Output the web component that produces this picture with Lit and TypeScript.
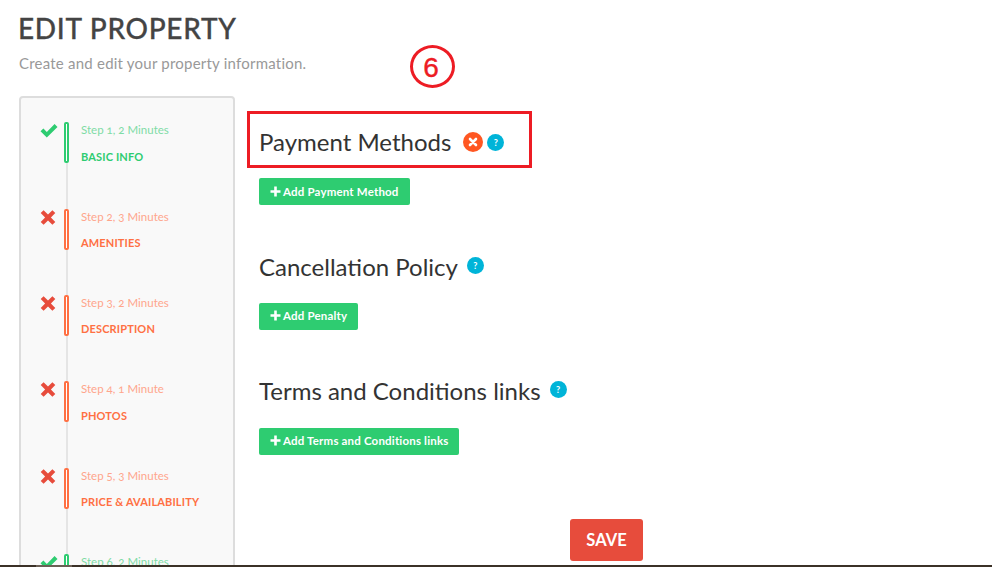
import { LitElement, html, css, svg } from "lit";
import { customElement } from "lit/decorators.js";

const check = svg`<path d="M0.5 9.3 L3.4 6.5 L6.8 9.9 L14.6 2 L17.5 4.9 L6.8 15.6 Z" fill="#2ecc71"/>`;
const cross = svg`<path d="M3.6 1.2 L8 5.6 L12.4 1.2 L15.3 4.1 L10.9 8.5 L15.3 12.9 L12.4 15.8 L8 11.4 L3.6 15.8 L0.7 12.9 L5.1 8.5 L0.7 4.1 Z" fill="#e74c3c"/>`;

const steps = [
  { ok: true, step: "Step 1, 2 Minutes", name: "BASIC INFO" },
  { ok: false, step: "Step 2, 3 Minutes", name: "AMENITIES" },
  { ok: false, step: "Step 3, 2 Minutes", name: "DESCRIPTION" },
  { ok: false, step: "Step 4, 1 Minute", name: "PHOTOS" },
  { ok: false, step: "Step 5, 3 Minutes", name: "PRICE & AVAILABILITY" },
  { ok: true, step: "Step 6, 2 Minutes", name: "" },
];

const sections = [
  { title: "Payment Methods", btn: "Add Payment Method", err: true },
  { title: "Cancellation Policy", btn: "Add Penalty", err: false },
  { title: "Terms and Conditions links", btn: "Add Terms and Conditions links", err: false },
];

@customElement("app-root")
export class AppRoot extends LitElement {
  static styles = css`
    :host {
      display: block;
      position: relative;
      width: 992px;
      height: 567px;
      overflow: hidden;
      background: #fff;
      font-family: "Lato", "Liberation Sans", sans-serif;
    }
    .page { padding: 0 0 0 19px; }
    h1 {
      margin: 0 0 0 -1px;
      padding-top: 11px;
      font-size: 28px;
      line-height: 34px;
      font-weight: 500;
      color: #444;
      letter-spacing: 0.7px;
      -webkit-text-stroke: 0.3px #444;
    }
    .sub {
      margin: 0;
      padding-top: 9px;
      font-size: 15px;
      line-height: 18px;
      color: #999;
      letter-spacing: 0.22px;
    }
    .cols { display: flex; margin-top: 24px; align-items: flex-start; }
    .panel {
      box-sizing: border-box;
      width: 216px;
      height: 520px;
      flex: none;
      border: 2px solid #ddd;
      border-radius: 4px;
      background: #f9f9f9;
      padding-top: 24.4px;
      position: relative;
    }
    .rail {
      position: absolute;
      left: 45px;
      top: 24px;
      bottom: 0;
      width: 2px;
      background: #e5e5e5;
    }
    .step {
      position: relative;
      height: 86.3px;
      display: grid;
      grid-template-columns: 18px 5px auto;
      align-items: start;
      padding-left: 19px;
    }
    .step svg { width: 18px; height: 17px; }
    .bar {
      box-sizing: border-box;
      margin-left: 6px;
      width: 5px;
      height: 41px;
      border: 2px solid;
      border-radius: 2px;
      background: #fff;
    }
    .ok .bar { border-color: #2ecc71; }
    .bad .bar { border-color: #ff7043; }
    .txt { margin-left: 18px; font-size: 11.5px; white-space: nowrap; }
    .s { line-height: 14px; margin-top: 1px; font-variant-numeric: oldstyle-nums; }
    .n { line-height: 14px; margin-top: 12.3px; font-weight: 700; font-size: 11px; letter-spacing: 0.15px; }
    .ok .s { color: #7fdca6; }
    .ok .n { color: #2ecc71; }
    .bad .s { color: #ffa58c; }
    .bad .n { color: #ff7043; }
    .main { padding: 30px 0 0 24px; flex: 1; }
    .sec { height: 124.6px; }
    .head { display: flex; align-items: center; height: 32px; }
    h2 {
      margin: 0;
      font-size: 24px;
      line-height: 30px;
      font-weight: 400;
      color: #333;
    }
    .dot {
      width: 17px;
      height: 17px;
      border-radius: 50%;
      background: #00b4d8;
      color: #fff;
      font-size: 9px;
      font-weight: 700;
      display: flex;
      align-items: center;
      justify-content: center;
    }
    .help { margin-left: 9px; margin-bottom: 3px; }
    .err {
      width: 20px;
      height: 20px;
      margin-left: 12px;
      border-radius: 50%;
      background: #ff5722;
      display: flex;
      align-items: center;
      justify-content: center;
    }
    .err svg { width: 10px; height: 10px; }
    .err + .help { margin-left: 4px; margin-top: 1px; margin-bottom: 0; }
    .btn {
      display: inline-flex;
      align-items: center;
      height: 27px;
      margin-top: 20.4px;
      padding: 0 11px 1px;
      border: 0;
      border-radius: 2px;
      background: #2ecc71;
      color: #fff;
      font: 700 11.5px "Lato", "Liberation Sans", sans-serif;
      letter-spacing: 0.18px;
    }
    .btn svg { width: 11px; height: 11px; margin-right: 2px; }
    .save {
      position: absolute;
      left: 570px;
      top: 519px;
      width: 73px;
      height: 42px;
      padding: 0 0 1px;
      border: 0;
      border-radius: 3px;
      background: #e74c3c;
      color: #fff;
      font: 700 16.5px "Lato", "Liberation Sans", sans-serif;
    }
    .box {
      position: absolute;
      left: 247px;
      top: 111px;
      width: 285px;
      height: 57px;
      box-sizing: border-box;
      border: 3px solid #ed1c24;
      pointer-events: none;
    }
    .six {
      position: absolute;
      left: 410px;
      top: 45px;
      width: 45px;
      height: 43px;
      box-sizing: border-box;
      padding: 0 3px 0 0;
      border: 3px solid #ed1c24;
      border-radius: 50%;
      color: #ed1c24;
      font: 400 28px/40px "Liberation Sans", sans-serif;
      -webkit-text-stroke: 0.4px #ed1c24;
      text-align: center;
    }
    .strip {
      position: absolute;
      left: 0;
      right: 0;
      bottom: 0;
      height: 2px;
      background: #3b3127;
    }
    .strip-thumb {
      margin-left: 36px;
      width: 36px;
      height: 2px;
      background: #6b5f55;
    }
  `;

  render() {
    return html`
      <div class="page">
        <h1>EDIT PROPERTY</h1>
        <p class="sub">Create and edit your property information.</p>
        <div class="cols">
          <div class="panel">
            <div class="rail"></div>
            ${steps.map(
              (s) => html`
                <div class="step ${s.ok ? "ok" : "bad"}">
                  <svg viewBox="0 0 18 17">${s.ok ? check : cross}</svg>
                  <div class="bar"></div>
                  <div class="txt">
                    <div class="s">${s.step}</div>
                    <div class="n">${s.name}</div>
                  </div>
                </div>
              `
            )}
          </div>
          <div class="main">
            ${sections.map(
              (s) => html`
                <div class="sec">
                  <div class="head">
                    <h2>${s.title}</h2>
                    ${s.err
                      ? html`<span class="err"><svg viewBox="0 0 10 10"><path d="M2 2 L8 8 M8 2 L2 8" stroke="#fff" stroke-width="2.6" stroke-linecap="round"/></svg></span>`
                      : ""}
                    <span class="dot help">?</span>
                  </div>
                  <button class="btn">
                    <svg viewBox="0 0 11 11"><path d="M4.2 0.5h2.6v3.7h3.7v2.6H6.8v3.7H4.2V6.8H0.5V4.2h3.7z" fill="#fff"/></svg>${s.btn}
                  </button>
                </div>
              `
            )}
          </div>
        </div>
      </div>
      <button class="save">SAVE</button>
      <div class="box"></div>
      <div class="six">6</div>
      <div class="strip"><div class="strip-thumb"></div></div>
    `;
  }
}
